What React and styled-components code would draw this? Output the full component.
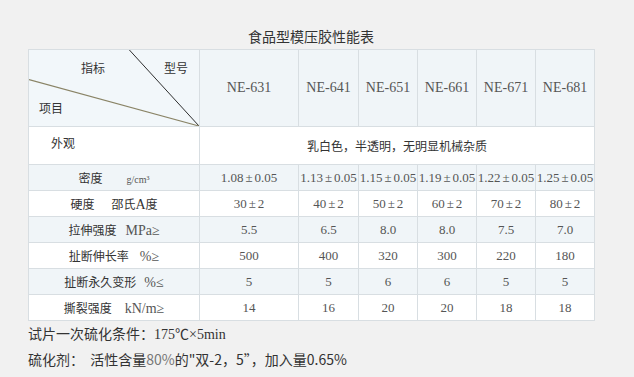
import React from "react";
import styled, { createGlobalStyle } from "styled-components";

const GlobalStyle = createGlobalStyle`
  html, body {
    margin: 0;
    padding: 0;
    background: #f1f1f1;
  }
  body {
    font-family: "Noto Sans CJK SC", "Noto Sans", sans-serif;
    color: #333;
  }
`;

const models = ["NE-631", "NE-641", "NE-651", "NE-661", "NE-671", "NE-681"];
const widths = [171, 99, 60, 59, 59, 59, 59];

const rows = [
  { name: "密度", unit: "g/cm³", small: true, gap: 24, shade: true, values: ["1.08±0.05", "1.13±0.05", "1.15±0.05", "1.19±0.05", "1.22±0.05", "1.25±0.05"] },
  { name: "硬度", unit: "邵氏A度", cjk: true, gap: 17, values: ["30±2", "40±2", "50±2", "60±2", "70±2", "80±2"] },
  { name: "拉伸强度", unit: "MPa≥", gap: 9, shade: true, values: ["5.5", "6.5", "8.0", "8.0", "7.5", "7.0"] },
  { name: "扯断伸长率", unit: "%≥", gap: 11, values: ["500", "400", "320", "300", "220", "180"] },
  { name: "扯断永久变形", unit: "%≤", gap: 8, shade: true, values: ["5", "5", "6", "6", "5", "5"] },
  { name: "撕裂强度", unit: "kN/m≥", gap: 13, values: ["14", "16", "20", "20", "18", "18"] },
];

function Value({ text }) {
  const parts = text.split("±");
  if (parts.length === 1) return text;
  return (
    <>
      {parts[0]}
      <Pm>±</Pm>
      {parts[1]}
    </>
  );
}

export default function App() {
  return (
    <Page>
      <GlobalStyle />
      <Title>食品型模压胶性能表</Title>
      <Table>
        <colgroup>
          {widths.map((w, i) => (
            <col key={i} style={{ width: w }} />
          ))}
        </colgroup>
        <tbody>
          <Row $height={77} $shade>
            <CornerCell>
              <Diagonal viewBox="0 0 171 77" preserveAspectRatio="none">
                <line x1="101" y1="0" x2="171" y2="77" stroke="#2c2c2c" strokeWidth="1" />
                <line x1="0" y1="30" x2="171" y2="77" stroke="#8a8466" strokeWidth="1.2" />
              </Diagonal>
              <CornerLabel $left={52} $top={10}>指标</CornerLabel>
              <CornerLabel $left={135} $top={10}>型号</CornerLabel>
              <CornerLabel $left={10} $top={50}>项目</CornerLabel>
            </CornerCell>
            {models.map((m) => (
              <HeadCell key={m}>{m}</HeadCell>
            ))}
          </Row>
          <Row $height={38}>
            <AppearanceCell>外观</AppearanceCell>
            <MergedCell colSpan={6}>乳白色，半透明，无明显机械杂质</MergedCell>
          </Row>
          {rows.map((r) => (
            <Row key={r.name} $height={26} $shade={r.shade}>
              <LabelCell>
                <Zh>{r.name}</Zh>
                <Unit $gap={r.gap} $small={r.small} $cjk={r.cjk}>
                  {r.cjk ? (
                    <>
                      邵氏<Latin>A</Latin>度
                    </>
                  ) : (
                    r.unit
                  )}
                </Unit>
              </LabelCell>
              {r.values.map((v, i) => (
                <Cell key={i}>
                  <Value text={v} />
                </Cell>
              ))}
            </Row>
          ))}
        </tbody>
      </Table>
      <Note>
        试片一次硫化条件：<Latin>175℃×5min</Latin>
      </Note>
      <Note>
        硫化剂：&nbsp;&nbsp;活性含量<Muted>80%</Muted>的"双-2，5”，加入量0.65%
      </Note>
    </Page>
  );
}

const Page = styled.div`
  padding: 26px 0 0 28px;
  width: 606px;
  min-height: 351px;
`;

const Title = styled.div`
  width: 566px;
  text-align: center;
  font-size: 14px;
  line-height: 20px;
  color: #333;
  margin-bottom: 3px;
`;

const Table = styled.table`
  border-collapse: collapse;
  table-layout: fixed;
  width: 566px;
  border: 1px solid #d8dee2;
  background: #fff;
`;

const Row = styled.tr`
  height: ${(p) => p.$height}px;
  background: ${(p) => (p.$shade ? "#f0f5f8" : "#ffffff")};
`;

const Cell = styled.td`
  border: 1px solid #d8dee2;
  padding: 0;
  text-align: center;
  vertical-align: middle;
  font-family: "Liberation Serif", "Noto Sans CJK SC", serif;
  font-size: 13px;
  color: #555;
  white-space: nowrap;
  overflow: hidden;
`;

const HeadCell = styled(Cell)`
  font-size: 14px;
`;

const Pm = styled.span`
  display: inline-block;
  width: 11px;
  text-align: center;
`;

const CornerCell = styled(Cell)`
  position: relative;
  background: #f2f7fa;
`;

const Diagonal = styled.svg`
  position: absolute;
  left: 0;
  top: 0;
  width: 100%;
  height: 100%;
`;

const CornerLabel = styled.span`
  position: absolute;
  left: ${(p) => p.$left}px;
  top: ${(p) => p.$top}px;
  font-family: "Noto Sans CJK SC", sans-serif;
  font-size: 12px;
  line-height: 16px;
  color: #333;
`;

const AppearanceCell = styled(Cell)`
  text-align: left;
  vertical-align: top;
  padding: 7px 0 0 22px;
  font-family: "Noto Sans CJK SC", sans-serif;
  font-size: 12px;
  color: #333;
`;

const MergedCell = styled(Cell)`
  font-family: "Noto Sans CJK SC", sans-serif;
  font-size: 12px;
  color: #333;
`;

const LabelCell = styled(Cell)`
  color: #333;
`;

const Zh = styled.span`
  font-family: "Noto Sans CJK SC", sans-serif;
  font-size: 12px;
  color: #333;
`;

const Unit = styled.span`
  margin-left: ${(p) => p.$gap}px;
  font-family: ${(p) =>
    p.$cjk ? `"Noto Sans CJK SC", sans-serif` : `"Liberation Serif", "Noto Sans CJK SC", serif`};
  font-size: ${(p) => (p.$small ? "10px" : p.$cjk ? "12px" : "14px")};
  color: ${(p) => (p.$cjk ? "#333" : "#555")};
`;

const Latin = styled.span`
  font-family: "Liberation Serif", "Noto Sans CJK SC", serif;
  font-size: 14px;
`;

const Note = styled.div`
  font-size: 14px;
  line-height: 25px;
  color: #333;
`;

const Muted = styled.span`
  color: #777;
`;
